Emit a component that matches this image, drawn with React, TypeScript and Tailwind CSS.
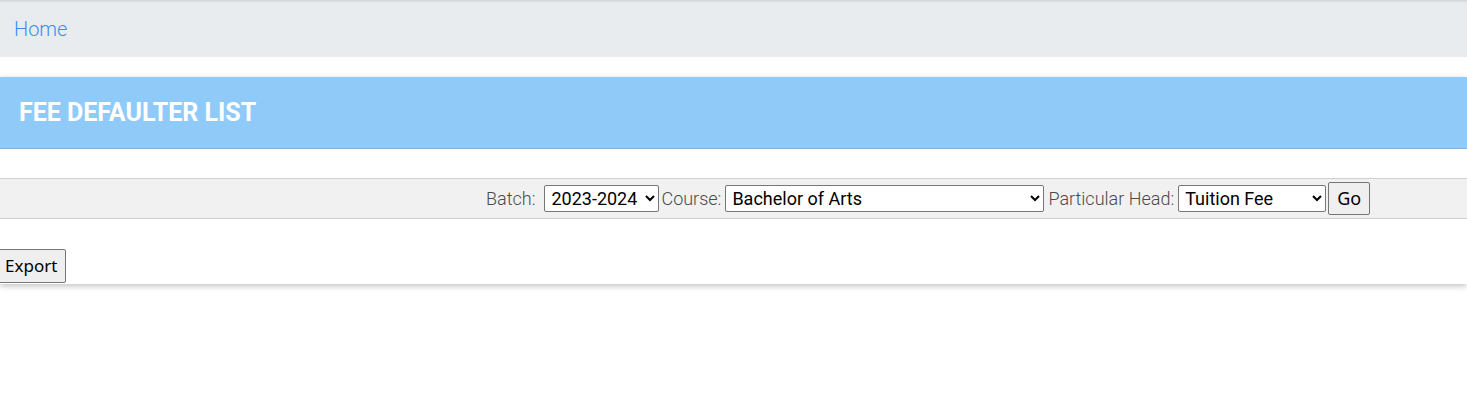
import { useState } from "react"

const FilterBar = () => {
    const [batch, setBatch] = useState("2023-2024")
    const [course, setCourse] = useState("Bachelor of Arts")
    const [head, setHead] = useState("Tuition Fee")
    return (
        <div className="flex items-center h-[41px] border-y border-[#cfcfcf] bg-[#f1f1f1] pl-[486px] text-[18px] font-light text-[#4a4a4a]">
            <span>Batch:</span>
            <select
                value={batch}
                onChange={e => setBatch(e.target.value)}
                className="ml-[9px] h-[27px] w-[115px] border border-[#767676] rounded-[2px] bg-white text-black font-normal pl-[2px]"
            >
                <option>2023-2024</option>
                <option>2022-2023</option>
            </select>
            <span className="ml-[2px]">Course:</span>
            <select
                value={course}
                onChange={e => setCourse(e.target.value)}
                className="ml-[4px] h-[27px] w-[319px] border border-[#767676] rounded-[2px] bg-white text-black font-normal pl-[2px]"
            >
                <option>Bachelor of Arts</option>
                <option>Bachelor of Science</option>
                <option>Bachelor of Commerce</option>
            </select>
            <span className="ml-[4px]">Particular Head:</span>
            <select
                value={head}
                onChange={e => setHead(e.target.value)}
                className="ml-[4px] h-[27px] w-[148px] border border-[#767676] rounded-[2px] bg-white text-black font-normal pl-[2px]"
            >
                <option>Tuition Fee</option>
                <option>Exam Fee</option>
            </select>
            <button className="ml-[2px] h-[33px] w-[42px] border border-[#767676] rounded-[2px] bg-[#efefef] text-black font-normal font-['Noto_Sans',sans-serif] text-[18px]">
                Go
            </button>
        </div>
    )
}

export default function App() {
    return (
        <div className="min-h-[412px] bg-white font-['Roboto',sans-serif]">
            <nav className="h-[57px] bg-[#e9ecef] flex items-center pl-[14px] shadow-[inset_0_3px_3px_-2px_rgba(0,0,0,0.12)]">
                <a href="#" className="text-[20px] font-light text-[#3d8bfd]">Home</a>
            </nav>
            <section className="mt-[20px] bg-white shadow-[0_2px_6px_rgba(0,0,0,0.25)]">
                <div className="h-[72px] flex items-center pl-[19px] bg-[#90caf9] border-b border-[#7fb2dd]">
                    <h1 className="text-[25px] font-bold text-white">FEE DEFAULTER LIST</h1>
                </div>
                <div className="pt-[29px]">
                    <FilterBar />
                </div>
                <div className="pt-[30px] pb-[1px] -ml-[4px]">
                    <button className="h-[34px] px-[8px] border border-[#767676] rounded-[2px] bg-[#efefef] text-black text-[17px] font-['Noto_Sans',sans-serif]">
                        Export
                    </button>
                </div>
            </section>
        </div>
    )
}
